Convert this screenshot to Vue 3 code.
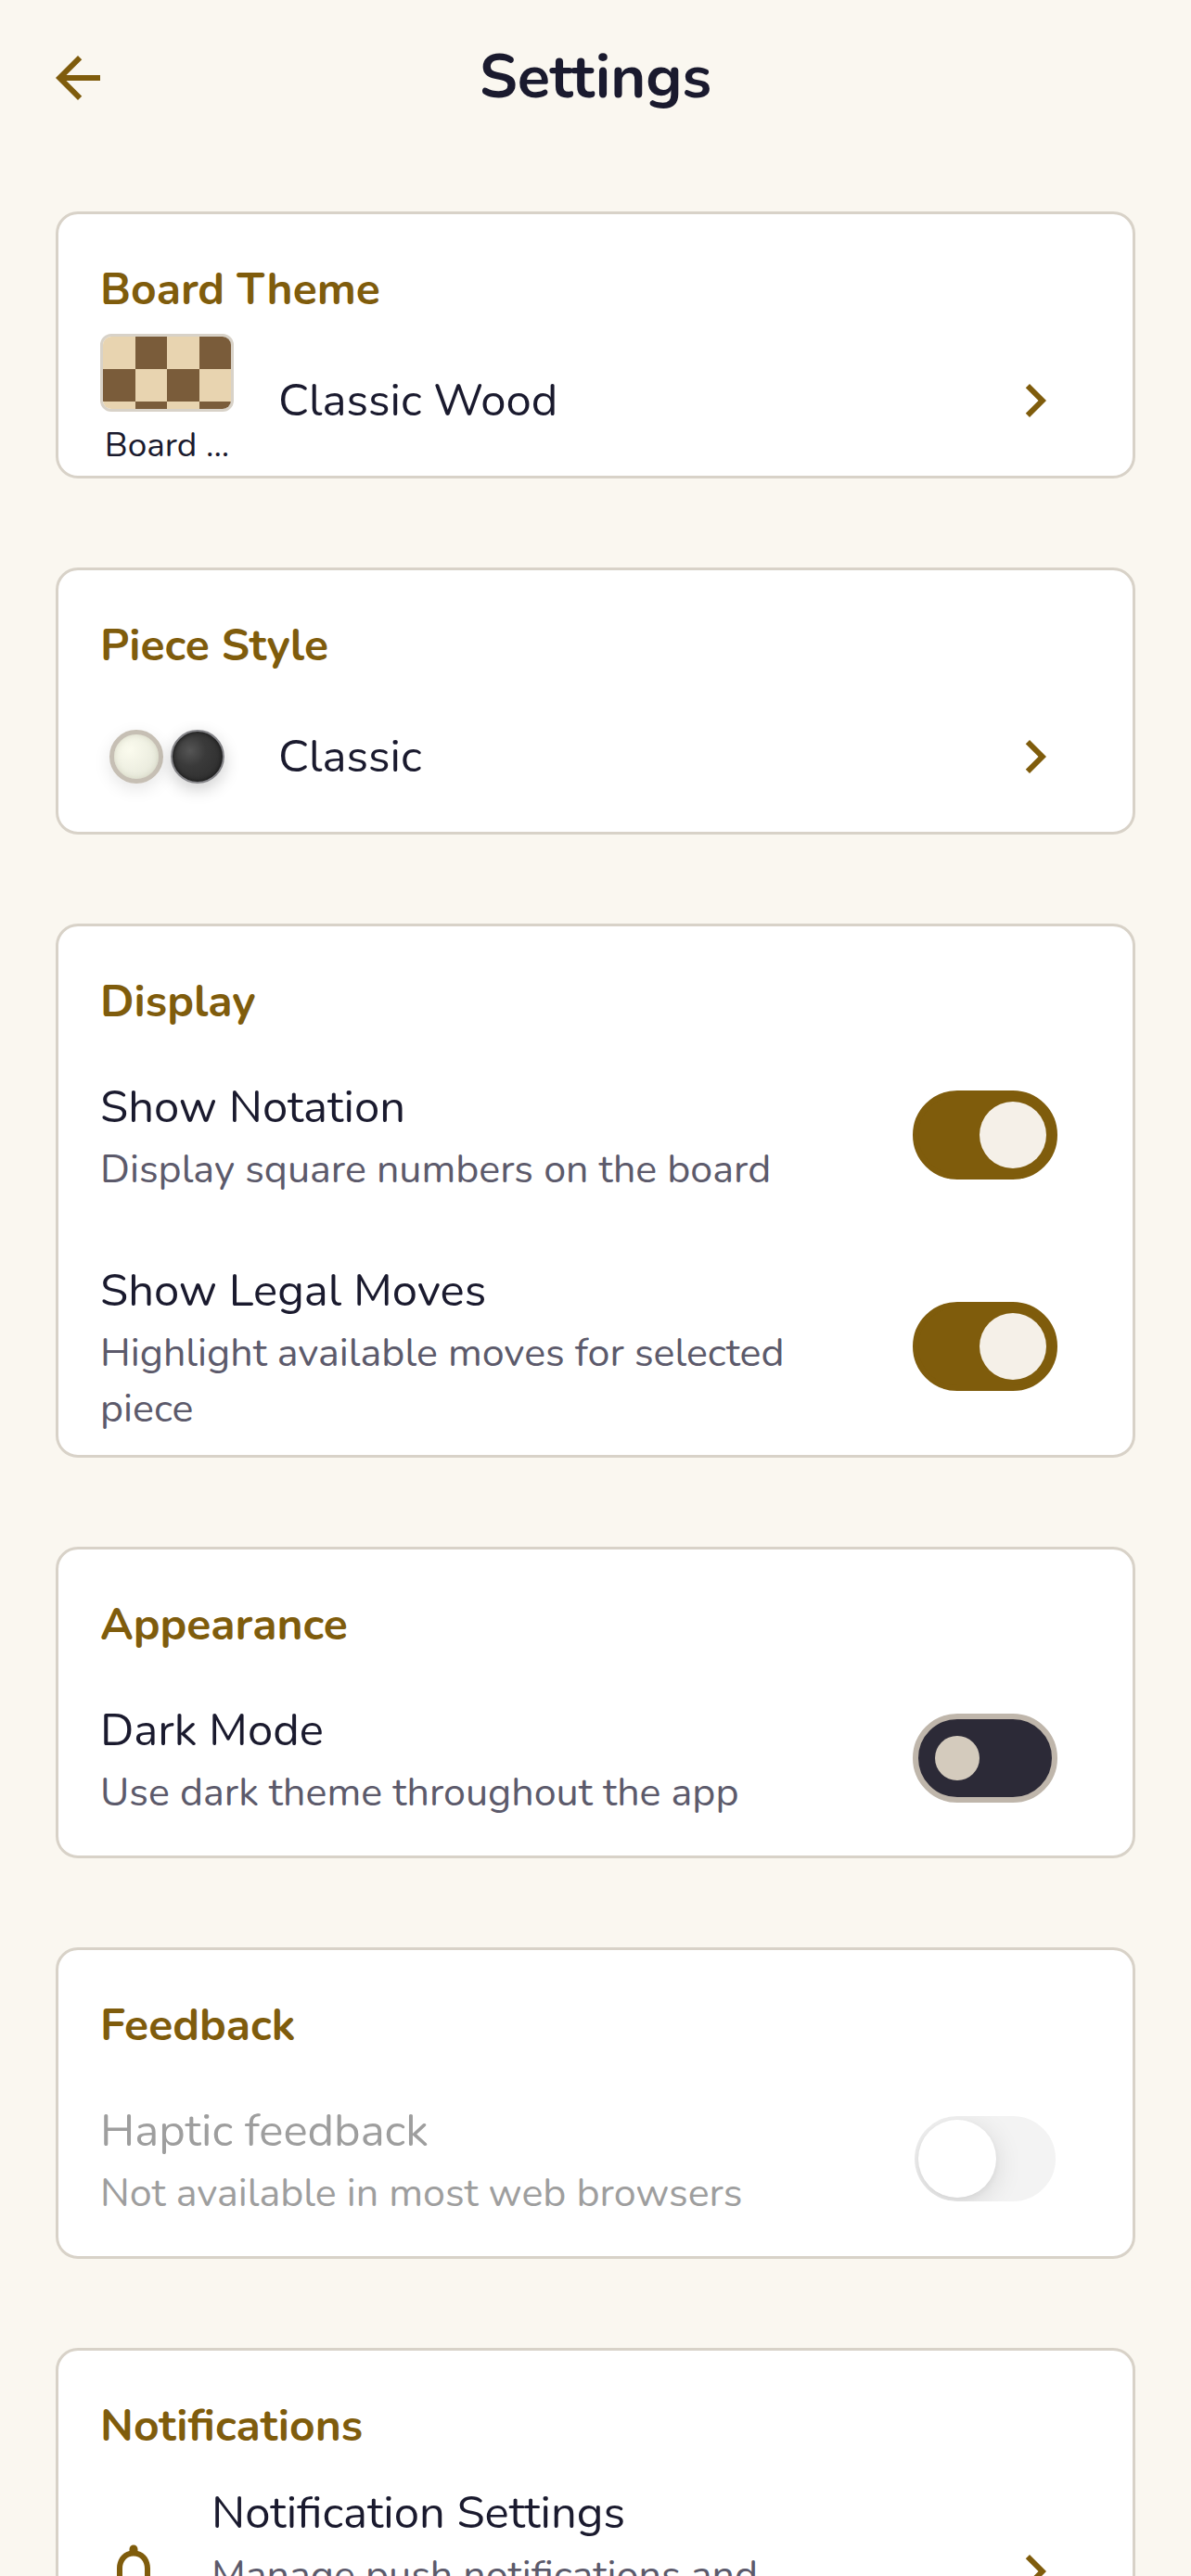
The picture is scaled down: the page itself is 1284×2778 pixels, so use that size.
<script setup>
import { reactive } from "vue";

const settings = reactive({
  notation: true,
  legalMoves: true,
  darkMode: false,
  haptics: false,
});

// 4 columns, the third row is cut by the preview frame
const squares = Array.from(
  { length: 12 },
  (_, i) => (Math.floor(i / 4) + i) % 2 === 1
);
</script>

<template>
  <div class="page">
    <header class="header">
      <button class="header__back" type="button" aria-label="Back">
        <svg class="icon" viewBox="0 0 24 24">
          <path
            d="M20 11H7.83l5.59-5.59L12 4l-8 8 8 8 1.41-1.41L7.83 13H20v-2z"
          />
        </svg>
      </button>
      <h1 class="header__title">Settings</h1>
    </header>

    <main class="content">
      <section class="card">
        <h2 class="card__title">Board Theme</h2>
        <button class="row row--nav" type="button">
          <span class="preview">
            <span class="board">
              <span
                v-for="(dark, i) in squares"
                :key="i"
                class="board__sq"
                :class="{ 'board__sq--dark': dark }"
              ></span>
            </span>
            <span class="preview__label">Board ...</span>
          </span>
          <span class="row__text">
            <span class="row__name">Classic Wood</span>
          </span>
          <svg class="icon" viewBox="0 0 24 24">
            <path d="M10 6L8.59 7.41 13.17 12l-4.58 4.59L10 18l6-6z" />
          </svg>
        </button>
      </section>

      <section class="card">
        <h2 class="card__title">Piece Style</h2>
        <button class="row row--nav" type="button">
          <span class="preview preview--pieces">
            <span class="piece piece--white"></span>
            <span class="piece piece--black"></span>
          </span>
          <span class="row__text">
            <span class="row__name">Classic</span>
          </span>
          <svg class="icon" viewBox="0 0 24 24">
            <path d="M10 6L8.59 7.41 13.17 12l-4.58 4.59L10 18l6-6z" />
          </svg>
        </button>
      </section>

      <section class="card card--multi">
        <h2 class="card__title">Display</h2>
        <label class="row">
          <span class="row__text">
            <span class="row__name">Show Notation</span>
            <span class="row__desc">Display square numbers on the board</span>
          </span>
          <input v-model="settings.notation" class="toggle" type="checkbox" />
        </label>
        <label class="row">
          <span class="row__text">
            <span class="row__name">Show Legal Moves</span>
            <span class="row__desc"
              >Highlight available moves for selected piece</span
            >
          </span>
          <input v-model="settings.legalMoves" class="toggle" type="checkbox" />
        </label>
      </section>

      <section class="card">
        <h2 class="card__title">Appearance</h2>
        <label class="row">
          <span class="row__text">
            <span class="row__name">Dark Mode</span>
            <span class="row__desc">Use dark theme throughout the app</span>
          </span>
          <input v-model="settings.darkMode" class="toggle" type="checkbox" />
        </label>
      </section>

      <section class="card">
        <h2 class="card__title">Feedback</h2>
        <label class="row row--disabled">
          <span class="row__text">
            <span class="row__name">Haptic feedback</span>
            <span class="row__desc">Not available in most web browsers</span>
          </span>
          <input
            v-model="settings.haptics"
            class="toggle"
            type="checkbox"
            disabled
          />
        </label>
      </section>

      <section class="card">
        <h2 class="card__title">Notifications</h2>
        <button class="row row--nav" type="button">
          <svg class="icon" viewBox="0 0 24 24">
            <path
              d="M12 22c1.1 0 2-.9 2-2h-4c0 1.1.9 2 2 2zm6-6v-5c0-3.07-1.63-5.64-4.5-6.32V4c0-.83-.67-1.5-1.5-1.5s-1.5.67-1.5 1.5v.68C7.64 5.36 6 7.92 6 11v5l-2 2v1h16v-1l-2-2zm-2 1H8v-6c0-2.48 1.51-4.5 4-4.5s4 2.02 4 4.5v6z"
            />
          </svg>
          <span class="row__text">
            <span class="row__name">Notification Settings</span>
            <span class="row__desc"
              >Manage push notifications and communication preferences</span
            >
          </span>
          <svg class="icon" viewBox="0 0 24 24">
            <path d="M10 6L8.59 7.41 13.17 12l-4.58 4.59L10 18l6-6z" />
          </svg>
        </button>
      </section>
    </main>
  </div>
</template>

<style>
body {
  margin: 0;
  background: #faf7f0;
}
</style>

<style scoped>
* {
  box-sizing: border-box;
}

.page {
  height: 100vh;
  display: flex;
  flex-direction: column;

  font-family: Nunito, "Open Sans", sans-serif;
  color: #1a1a2e;
  background: #faf7f0;
}

button {
  padding: 0;
  border: 0;
  background: none;
  font: inherit;
  color: inherit;
  text-align: left;
  cursor: pointer;
}

.icon {
  flex: none;
  display: block;
  width: 72px;
  height: 72px;
  fill: #7f5c0c;
}

.header {
  flex: none;
  display: grid;
  grid-template-columns: 72px 1fr 72px;
  align-items: center;
  height: 168px;
  padding: 0 48px;
}

.header__title {
  margin: 0;
  font-size: 65px;
  line-height: 90px;
  font-weight: 700;
  text-align: center;
}

.content {
  flex: 1;
  min-height: 0;
  display: flex;
  flex-direction: column;
  gap: 96px;
  padding: 60px;
  overflow-y: auto;
  scrollbar-width: none;
}

.card {
  flex: none;
  padding-bottom: 6px;
  border: 3px solid #d8d2c8;
  border-radius: 24px;
  background: #fff;
}

.card--multi > :last-child {
  margin-bottom: -18px;
}

.card__title {
  margin: 0;
  padding: 51px 45px 15px;
  font-size: 48px;
  line-height: 60px;
  font-weight: 700;
  color: #7f5c0c;
}

.row {
  display: flex;
  align-items: center;
  gap: 60px;
  width: 100%;
  padding: 0 81px 0 45px;
}

.row--nav {
  gap: 48px;
  min-height: 150px;
  padding-right: 69px;
}

.row__text {
  flex: 1;
  display: flex;
  flex-direction: column;
  gap: 6px;
  padding: 38px 0 32px;
}

.row--nav .row__text {
  padding: 18px 0;
}

.row__name {
  font-size: 49px;
  line-height: 62px;
}

.row__desc {
  font-size: 43px;
  line-height: 60px;
  color: #5c5a6b;
}

.row--disabled .row__name,
.row--disabled .row__desc {
  color: #9e9e9e;
}

.preview {
  flex: none;
  display: flex;
  flex-direction: column;
  gap: 12px;
  width: 144px;
}

.preview__label {
  font-size: 37px;
  line-height: 48px;
  text-align: center;
  white-space: nowrap;
}

.board {
  display: grid;
  grid-template-columns: repeat(4, 1fr);
  grid-auto-rows: 35px;
  height: 84px;
  border: 3px solid #d8d2c8;
  border-radius: 12px;
  overflow: hidden;
}

.board__sq {
  background: #e8d4b0;
}

.board__sq--dark {
  background: #7a5c3a;
}

.preview--pieces {
  flex-direction: row;
  justify-content: center;
  gap: 8px;
}

.piece {
  width: 58px;
  height: 58px;
  border-radius: 50%;
}

.piece--white {
  border: 5px solid #c6bfb4;
  background: radial-gradient(circle at 35% 35%, #fbfbee, #e2e4d6);
  box-shadow: 0 6px 18px rgba(0, 0, 0, 0.1),
    inset 0 0 6px rgba(160, 160, 130, 0.3);
}

.piece--black {
  border: 2px solid #858589;
  background: radial-gradient(circle at 35% 38%, #555, #3a3a3a 35%, #2a2a2a);
  box-shadow: 0 6px 18px rgba(0, 0, 0, 0.2), inset 0 0 5px #111;
}

.toggle {
  appearance: none;
  flex: none;
  display: flex;
  align-items: center;
  width: 156px;
  height: 96px;
  margin: 0;
  padding: 0 18px;
  border: 6px solid #bfb6ab;
  border-radius: 48px;
  background: #2c2a37;
  overflow: hidden;
}

.toggle::before {
  content: "";
  width: 48px;
  height: 48px;
  border-radius: 50%;
  background: #d4cbbd;
}

.toggle:checked {
  justify-content: flex-end;
  padding: 0 6px;
  border-color: #7f5c0c;
  background: #7f5c0c;
}

.toggle:checked::before {
  width: 72px;
  height: 72px;
  background: #f5f0e8;
}

.toggle:disabled {
  padding: 0 4px;
  border: 2px solid #fff;
  background: #f3f3f3;
}

.toggle:disabled::before {
  width: 84px;
  height: 84px;
  background: #fff;
  box-shadow: 0 6px 30px rgba(0, 0, 0, 0.12), 0 3px 6px rgba(0, 0, 0, 0.05);
}
</style>
